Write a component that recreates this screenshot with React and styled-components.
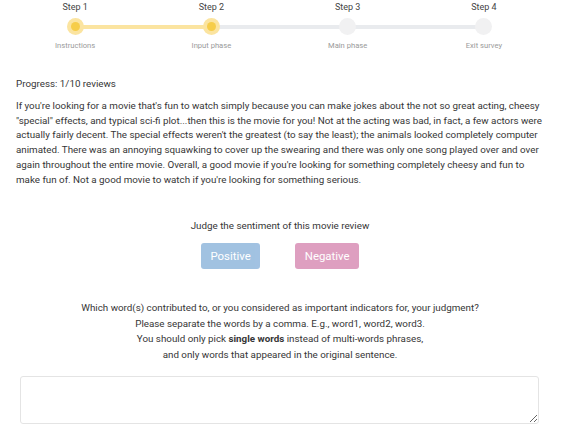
import React, { useState } from 'react'
import styled, { createGlobalStyle } from 'styled-components'

const GlobalStyle = createGlobalStyle`
    body {
        margin: 0;
        background: #fff;
        font-family: Roboto, "Liberation Sans", sans-serif;
        color: #363636;
    }
`

const Page = styled.div`
    padding: 0 24px 0 16px;
`

const Stepper = styled.div`
    display: grid;
    grid-template-columns: repeat(4, 1fr);
    width: 545px;
    margin-left: -9px;
    padding-top: 1px;
`

const Step = styled.div`
    display: flex;
    flex-direction: column;
    align-items: center;
`

const StepTitle = styled.div`
    font-size: 9px;
    line-height: 13px;
    color: #444;
`

const DotRow = styled.div`
    position: relative;
    width: 100%;
    height: 17px;
    margin-top: 4px;
    display: flex;
    justify-content: center;
    align-items: center;
`

const Line = styled.div`
    position: absolute;
    top: 6.5px;
    left: 50%;
    width: 100%;
    height: 4px;
    background: ${p => (p.$done ? '#fbe4a0' : '#e9ebee')};
`

const Dot = styled.div`
    position: relative;
    z-index: 1;
    width: 17px;
    height: 17px;
    border-radius: 50%;
    background: ${p => (p.$active ? '#fbe4a0' : '#f1f1f2')};
    display: flex;
    align-items: center;
    justify-content: center;

    &::after {
        content: '';
        display: ${p => (p.$active ? 'block' : 'none')};
        width: 9px;
        height: 9px;
        border-radius: 50%;
        background: #f6cd4a;
    }
`

const StepLabel = styled.div`
    margin-top: 5px;
    font-size: 7.6px;
    line-height: 11px;
    color: #9a9a9a;
`

const Progress = styled.div`
    margin-top: 26px;
    font-size: 9.8px;
    line-height: 14px;
`

const Review = styled.p`
    margin: 8px 0 0;
    font-size: 9.8px;
    line-height: 14.7px;
`

const Judge = styled.div`
    margin-top: 32px;
    text-align: center;
    font-size: 9.8px;
    line-height: 14px;
`

const ButtonGroup = styled.div`
    margin-top: 10px;
    display: flex;
    justify-content: center;
    gap: 35px;
`

const Choice = styled.button`
    height: 26px;
    padding: 0 9.5px;
    border: none;
    border-radius: 3px;
    background: ${p => p.$color};
    color: #fff;
    font-family: inherit;
    font-size: 11.4px;
    cursor: pointer;
    opacity: ${p => (p.$selected ? 1 : 0.95)};
`

const Question = styled.div`
    margin-top: 31px;
    text-align: center;
    font-size: 9.8px;
    line-height: 15.6px;
`

const Answer = styled.textarea`
    display: block;
    box-sizing: border-box;
    margin: 13px 0 0 4px;
    width: 519px;
    height: 48px;
    border: 1px solid #e4e4e4;
    border-radius: 3px;
    font-family: inherit;
    font-size: 11px;
    resize: vertical;
    outline: none;
`

const steps = [
    { title: 'Step 1', label: 'Instructions' },
    { title: 'Step 2', label: 'Input phase' },
    { title: 'Step 3', label: 'Main phase' },
    { title: 'Step 4', label: 'Exit survey' }
]

const current = 1

const review = `If you're looking for a movie that's fun to watch simply because you can make jokes about the not so great acting, cheesy "special" effects, and typical sci-fi plot...then this is the movie for you! Not at the acting was bad, in fact, a few actors were actually fairly decent. The special effects weren't the greatest (to say the least); the animals looked completely computer animated. There was an annoying squawking to cover up the swearing and there was only one song played over and over again throughout the entire movie. Overall, a good movie if you're looking for something completely cheesy and fun to make fun of. Not a good movie to watch if you're looking for something serious.`

const App = () => {
    const [sentiment, setSentiment] = useState(null)
    const [words, setWords] = useState('')

    return (
        <Page>
            <GlobalStyle />
            <Stepper>
                {steps.map((s, i) => (
                    <Step key={s.title}>
                        <StepTitle>{s.title}</StepTitle>
                        <DotRow>
                            {i < steps.length - 1 && <Line $done={i < current} />}
                            <Dot $active={i <= current} />
                        </DotRow>
                        <StepLabel>{s.label}</StepLabel>
                    </Step>
                ))}
            </Stepper>

            <Progress>Progress: 1/10 reviews</Progress>
            <Review>{review}</Review>

            <Judge>Judge the sentiment of this movie review</Judge>
            <ButtonGroup>
                <Choice
                    $color="#9dbfe0"
                    $selected={sentiment === 'positive'}
                    onClick={() => setSentiment('positive')}
                >
                    Positive
                </Choice>
                <Choice
                    $color="#dd9abd"
                    $selected={sentiment === 'negative'}
                    onClick={() => setSentiment('negative')}
                >
                    Negative
                </Choice>
            </ButtonGroup>

            <Question>
                Which word(s) contributed to, or you considered as important indicators for, your judgment?<br />
                Please separate the words by a comma. E.g., word1, word2, word3.<br />
                You should only pick <strong>single words</strong> instead of multi-words phrases,<br />
                and only words that appeared in the original sentence.
            </Question>

            <Answer value={words} onChange={e => setWords(e.target.value)} />
        </Page>
    )
}

export default App
